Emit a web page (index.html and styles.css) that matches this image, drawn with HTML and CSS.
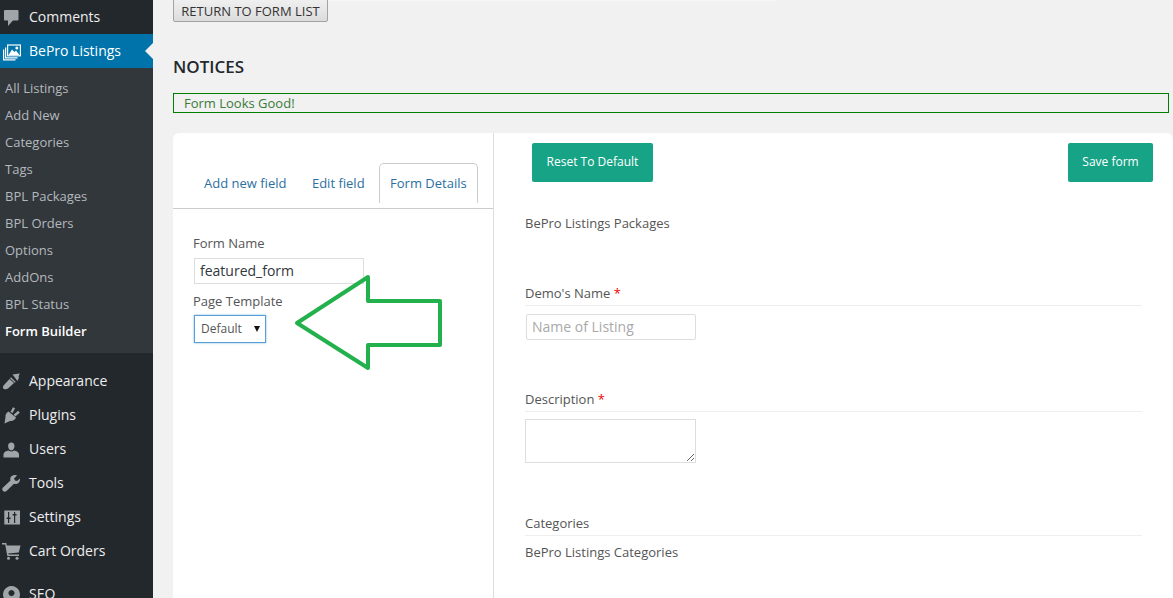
FILE: index.html
```html
<!DOCTYPE html>
<html lang="en">
<head>
<meta charset="utf-8">
<title>Form Builder</title>
<link rel="stylesheet" href="styles.css">
</head>
<body>
<div class="page">
  <aside class="sidebar">
    <a class="menu-item"><svg class="icon" viewBox="0 0 19 19"><path d="M3 2h12.500a1 1 0 0 1 1 1v8.500a1 1 0 0 1-1 1H11l-5 5.500v-5.500H3a1 1 0 0 1-1-1V3a1 1 0 0 1 1-1z"/></svg>Comments</a>
    <a class="menu-item active"><svg class="icon" viewBox="0 0 19 19"><rect class="line" x="5.600" y="3" width="12.800" height="10.800"/><path d="M6.500 13 10 7.500l2.500 2.500 1.500-1.500 3.500 4.500z"/><circle cx="14.800" cy="6" r="1.500"/><path class="line" d="M3.600 5.500V15.800H15.500M1.600 7.500V17.800H13.500"/></svg>BePro Listings<span class="pointer"></span></a>
    <nav class="submenu">
      <a>All Listings</a>
      <a>Add New</a>
      <a>Categories</a>
      <a>Tags</a>
      <a>BPL Packages</a>
      <a>BPL Orders</a>
      <a>Options</a>
      <a>AddOns</a>
      <a>BPL Status</a>
      <a class="current">Form Builder</a>
    </nav>
    <div class="menu-group">
      <a class="menu-item"><svg class="icon" viewBox="0 0 19 19"><path d="M10.500 2.500 17.800 1.500 16.500 4.500 17 5.500 15.500 9zM9 5.200 13.800 10 12.800 10.800 8 6.200zM7.500 7 12 11 6 16.500C4.500 17.800 1.500 17.500 1 16 .8 15 1 14 2 13z"/></svg>Appearance</a>
      <a class="menu-item"><svg class="icon" viewBox="0 0 19 19"><path d="M6.500 5.500 14 11.500C13 14 10.500 15.500 8 15L2.500 17.500 3.500 11C3 9 4.500 6.500 6.500 5.500Z"/><path class="plug" d="M9.500 6.500 12 1.800M12.500 9.500 17 5.800"/></svg>Plugins</a>
      <a class="menu-item"><svg class="icon" viewBox="0 0 19 19"><path d="M9.300 2.500c2 0 3.200 1.500 3.200 3.500s-1.200 4.500-3.200 4.500S6.100 8 6.100 6 7.300 2.500 9.300 2.500zM6.500 10.500c1.700 1.300 3.900 1.300 5.600 0 2.500.5 4.900 1.800 4.900 3.800v3.200H1.500v-3.200c0-2 2.500-3.300 5-3.800z"/></svg>Users</a>
      <a class="menu-item"><svg class="icon" viewBox="1.500 1 19 19"><path d="M16.500 2.500 13.500 5.500l1 2 2 .5 3-2.500c.3 2.500-1 5-3.500 5.500-1 .2-2 0-2.500-.2L6 18c-1 1-2.500 1-3.500 0s-1-2.500 0-3.500l7.500-7c-.3-1-.3-2 0-3C10.800 2.500 14 1.500 16.500 2.500z"/></svg>Tools</a>
      <a class="menu-item"><svg class="icon" viewBox="0 0 19 19"><path fill-rule="evenodd" d="M2.300 2.500h15.700v14H2.300zM6 4v5.500H4.600V11H6v4h1.200v-4h1.400V9.500H7.200V4zM12 4v2H10.600V7.500H12V15h1.200V7.500h1.400V6h-1.400V4z"/></svg>Settings</a>
      <a class="menu-item"><svg class="icon" viewBox="0 0 19 19"><path d="M0 1h4.300l.5 2.500H18.500L16.800 10.500 6.300 11.500 6.500 12.500H17V14H5.300L3.200 2.500H0z"/><circle cx="6.500" cy="16.300" r="1.500"/><circle cx="15" cy="16.300" r="1.500"/></svg>Cart Orders</a>
    </div>
    <div class="menu-group">
      <a class="menu-item"><svg class="icon" viewBox="0 0 19 19"><path fill-rule="evenodd" d="M9.500 1a8.500 8.500 0 1 1-.01 0zM9.500 5a3 3 0 1 0 .01 0z"/></svg>SEO</a>
    </div>
  </aside>
  <main class="content">
    <div class="top-bar"><button class="return-btn">RETURN TO FORM LIST</button></div>
    <h2 class="notices-title">NOTICES</h2>
    <div class="notice">Form Looks Good!</div>
    <section class="card">
      <div class="left-col">
        <div class="tabs">
          <a class="tab">Add new field</a>
          <a class="tab">Edit field</a>
          <a class="tab selected">Form Details</a>
        </div>
        <div class="details">
          <label class="detail-label">Form Name</label>
          <input class="name-input" type="text" value="featured_form">
          <label class="detail-label second">Page Template</label>
          <div class="select-box">Default<span class="caret"></span></div>
        </div>
      </div>
      <div class="right-col">
        <div class="actions">
          <button class="green-btn">Reset To Default</button>
          <button class="green-btn">Save form</button>
        </div>
        <p class="plain first">BePro Listings Packages</p>
        <div class="field name-field">
          <div class="field-label">Demo's Name <span class="req">*</span></div>
          <input class="listing-input" type="text" placeholder="Name of Listing">
        </div>
        <div class="field desc-field">
          <div class="field-label">Description <span class="req">*</span></div>
          <textarea class="desc-input"></textarea>
        </div>
        <div class="field cat-field">
          <div class="field-label">Categories</div>
          <p class="plain">BePro Listings Categories</p>
        </div>
      </div>
    </section>
  </main>
  <svg class="arrow" viewBox="0 0 160 104" width="160" height="104"><path d="M4 50 75 4V28H147V72H75V95Z"/></svg>
</div>
</body>
</html>
```

FILE: styles.css
```css
* { box-sizing: border-box; }
html, body { margin: 0; padding: 0; height: 598px; overflow: hidden; }
body { background: #f1f1f1; font-family: "Open Sans", sans-serif; font-size: 13px; color: #444; }
.page { position: relative; display: flex; width: 1173px; height: 598px; overflow: hidden; }

.sidebar { flex: 0 0 153px; width: 153px; background: #23282d; overflow: hidden; }
.menu-item { position: relative; display: flex; align-items: center; height: 34px; padding-left: 2px; padding-bottom: 2px; color: #eee; font-size: 14px; }
.menu-item.active { background: #0073aa; color: #fff; }
.icon { flex: 0 0 19px; width: 19px; height: 19px; margin-top: 2px; margin-right: 8px; fill: #a0a5aa; }
.active .icon { fill: #fff; }
.icon .line { fill: none; stroke: #fff; stroke-width: 1.2; }
.icon .plug { fill: none; stroke: #a0a5aa; stroke-width: 2.4; }
.pointer { position: absolute; right: 0; top: 9px; border: 8px solid transparent; border-right-color: #f1f1f1; border-left-width: 0; }
.submenu { display: flex; flex-direction: column; padding: 7px 0 8px; background: #32373c; }
.submenu a { display: flex; align-items: center; height: 27px; padding-left: 5px; padding-bottom: 2px; color: #b4b9be; font-size: 13px; }
.submenu a.current { color: #fff; font-weight: 600; }
.menu-group { padding-top: 11px; }
.menu-group + .menu-group { padding-top: 9px; }

.content { flex: 1; min-width: 0; padding-left: 20px; }
.top-bar { width: 604px; height: 22px; border-top: 1px solid #f6f6f6; overflow: visible; }
.return-btn { display: block; width: 155px; height: 28px; margin-top: -7px; padding: 6px 0 0; border: 1px solid #a3a3a3; border-radius: 2px; background: linear-gradient(#f4f4f4, #dcdcdc); color: #333; font: 13px "Open Sans", sans-serif; }
.notices-title { margin: 33px 0 0; height: 24px; line-height: 24px; font-size: 17px; font-weight: 600; color: #23282d; }
.notice { width: 996px; height: 20px; margin-top: 14px; padding-left: 10px; border: 1px solid #008000; color: #3b7a3b; font-size: 13px; line-height: 18px; }
.card { display: flex; width: 1000px; height: 465px; margin-top: 20px; background: #fff; border-radius: 6px 6px 0 0; }

.left-col { flex: 0 0 321px; border-right: 1px solid #ddd; }
.tabs { display: flex; align-items: flex-start; gap: 3.5px; height: 76px; padding: 30px 0 0 20px; border-bottom: 1px solid #ccc; }
.tab { display: block; height: 40px; padding: 0 11px; line-height: 40px; color: #2b6f9f; font-size: 13px; white-space: nowrap; }
.tab.selected { padding: 0 10px; border: 1px solid #ccc; border-bottom: 0; border-radius: 5px 5px 0 0; background: #fff; line-height: 39px; }
.details { display: flex; flex-direction: column; align-items: flex-start; padding: 25px 0 0 20px; }
.detail-label { height: 18px; line-height: 18px; font-size: 13px; color: #555; }
.detail-label.second { margin-top: 8px; }
.name-input { width: 170px; height: 26px; margin: 6px 0 0 1px; padding: 0 5px 2px; border: 1px solid #ddd; color: #32373c; font: 14px "Open Sans", sans-serif; outline: 0; }
.select-box { position: relative; width: 72px; height: 28px; margin: 5px 0 0 1px; padding-left: 6px; border: 1px solid #5b9dd9; box-shadow: 0 0 2px rgba(30,140,190,.6); color: #555; font-size: 12px; line-height: 26px; }
.caret { position: absolute; right: 5px; top: 10px; border: 3.5px solid transparent; border-top: 6px solid #111; border-bottom: 0; }

.right-col { flex: 1; min-width: 0; padding-left: 31px; padding-right: 31px; }
.actions { display: flex; justify-content: space-between; padding: 10px 0 0 7px; margin-right: -11px; }
.green-btn { width: 121px; height: 39px; padding: 0 0 2px; border: 0; border-radius: 2px; background: #17a386; color: #fff; font: 500 12px "Open Sans", sans-serif; }
.green-btn + .green-btn { width: 85px; }
.plain { margin: 0; height: 18px; line-height: 18px; font-size: 13px; color: #555; }
.plain.first { margin-top: 32px; }
.field-label { height: 22px; line-height: 18px; border-bottom: 1px solid #eee; font-size: 13px; color: #555; }
.req { color: #e00; }
.name-field { margin-top: 52px; }
.listing-input { display: block; width: 170px; height: 26px; margin: 8px 0 0 1px; padding: 0 5px 2px; border: 1px solid #ddd; border-radius: 2px; font: 14px "Open Sans", sans-serif; outline: 0; }
.listing-input::placeholder { color: #a9a9a9; opacity: 1; }
.desc-field { margin-top: 50px; }
.desc-input { display: block; width: 171px; height: 44px; margin: 7px 0 0; border: 1px solid #ddd; outline: 0; }
.cat-field { margin-top: 51px; }
.cat-field .plain { margin-top: 7px; }

.arrow { position: absolute; left: 293px; top: 273px; fill: none; stroke: #22b14c; stroke-width: 4; stroke-linejoin: round; }
```
